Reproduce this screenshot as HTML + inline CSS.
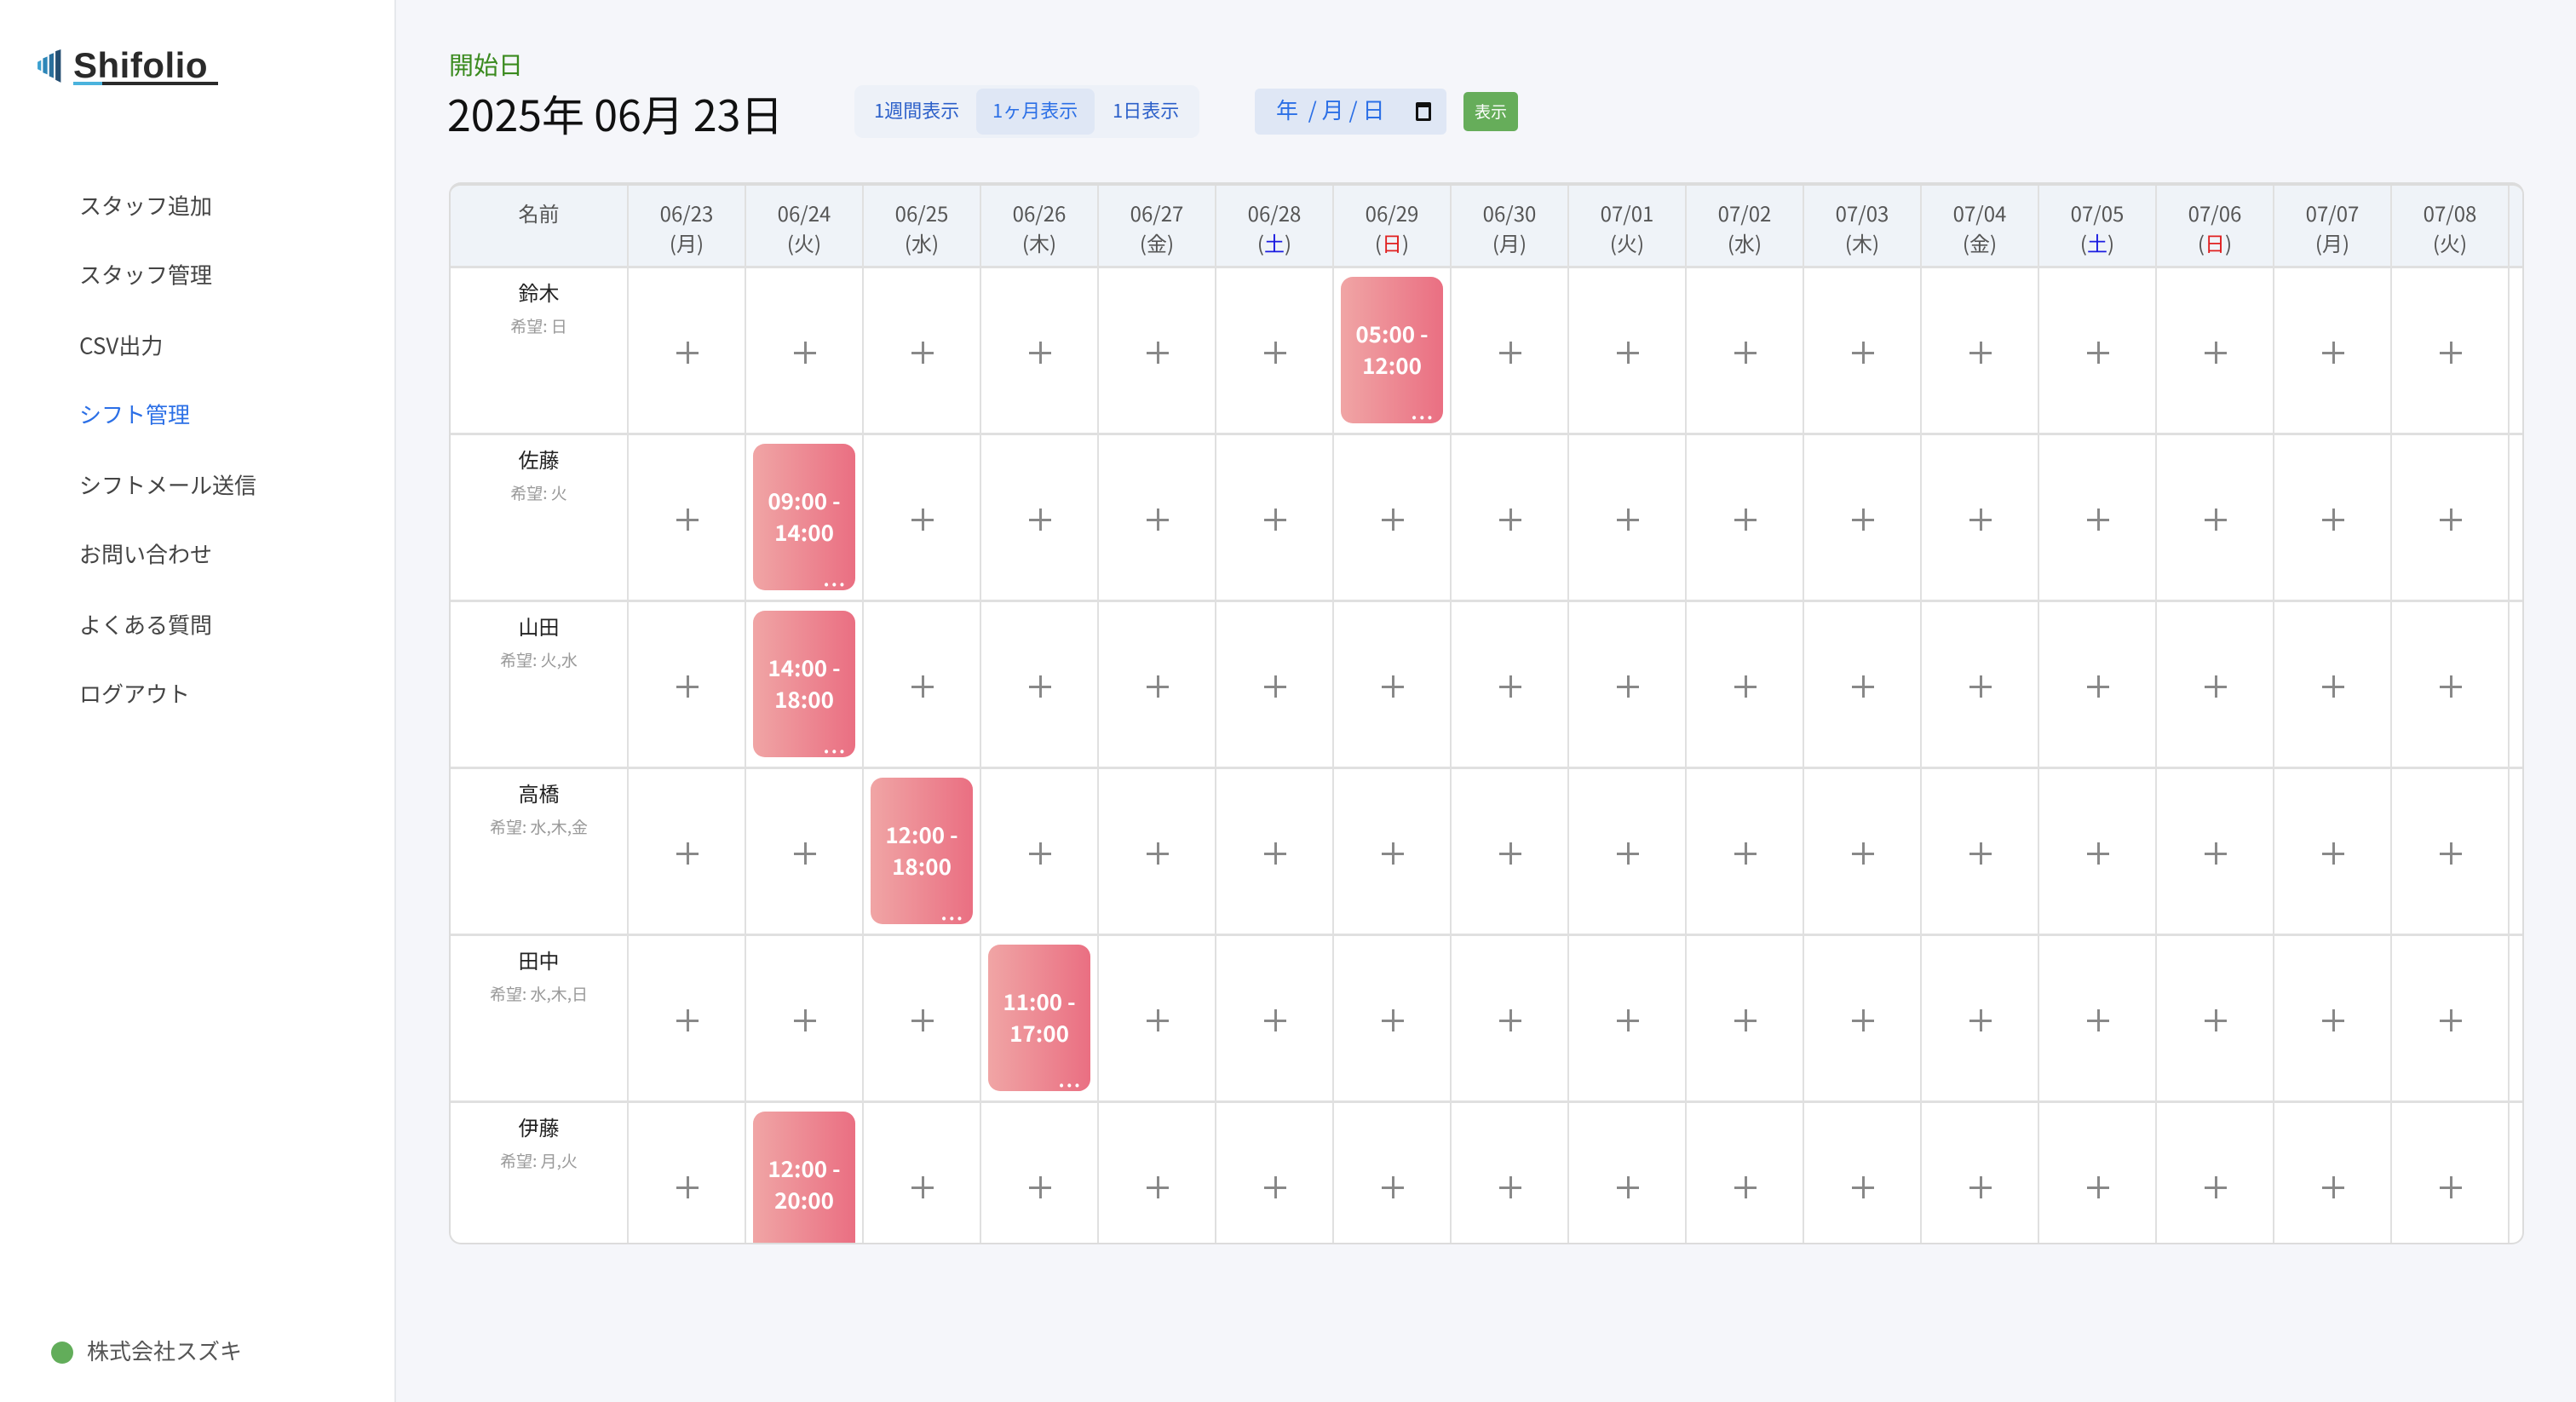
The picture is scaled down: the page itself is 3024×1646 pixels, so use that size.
<!DOCTYPE html>
<html><head><meta charset="utf-8">
<style>
*{box-sizing:border-box;margin:0;padding:0}
body{width:3024px;height:1646px;background:#f5f6fa;font-family:"Noto Sans CJK JP","Liberation Sans",sans-serif;line-height:1.2;position:relative;overflow:hidden}
.side{position:absolute;left:0;top:0;width:465px;height:1646px;background:#fff;border-right:2px solid #e6e8ec}
.nav{position:absolute;left:93px;font-size:26px;color:#444;transform:translateY(-50%)}
.ab{position:absolute}
.tbl{position:absolute;left:527px;top:214px;width:2436px;height:1247px;border:2px solid #dcdcdc;border-top-width:4px;border-radius:14px;overflow:hidden;background:#fff}
.row{display:flex;height:196px;border-bottom:3px solid #e0e0e0}
.hdr{height:97px;background:#eff3f8;border-bottom:3px solid #e0e0e0}
.c{width:138px;flex:none;border-right:2px solid #e0e0e0;position:relative}
.n{width:209px;flex:none;border-right:2px solid #e0e0e0;text-align:center;position:relative}
.hdr .c,.hdr .n{font-size:24px;color:#555;text-align:center;padding-top:14px;line-height:35px}
.plus{position:absolute;left:56px;top:86px;width:26px;height:26px}
.plus:before{content:"";position:absolute;left:0;top:11.5px;width:26px;height:3px;background:#888}
.plus:after{content:"";position:absolute;top:0;left:11.5px;height:26px;width:3px;background:#888}
.nm{position:absolute;left:0;right:0;top:14px;font-size:24px;color:#222}
.hp{position:absolute;left:0;right:0;top:57px;font-size:19px;color:#999}
.card{position:absolute;left:8px;top:10px;width:120px;height:172px;border-radius:14px;background:linear-gradient(90deg,#f0a5a5,#ea6f82);color:#fff;font-size:26px;font-weight:bold;text-align:center;line-height:37px;padding-top:48px}
.dots{position:absolute;right:10px;bottom:4px;font-size:22px;line-height:20px;letter-spacing:2px}
</style></head><body>
<div class="side">
 <div class="ab" style="left:42px;top:56px;width:220px;height:46px">
  <svg width="42" height="42" viewBox="0 0 40 40" style="position:absolute;left:0;top:2px">
   <polygon points="2,14 6,12 6,24 2,22" fill="#3aa0d0"/>
   <polygon points="8,10 13,8 13,28 8,26" fill="#2c86b8"/>
   <polygon points="15,6 20,4 20,32 15,30" fill="#2a6f9c"/>
   <polygon points="22,2 28,0 28,37 22,34" fill="#244e72"/>
  </svg>
  <div class="ab" style="left:44px;top:-4px;font-size:42px;font-weight:bold;color:#2a2a2a;font-family:'Liberation Sans',sans-serif;letter-spacing:0.5px">Shifolio</div>
  <div class="ab" style="left:44px;top:40px;width:34px;height:4px;background:#4ab3dd"></div>
  <div class="ab" style="left:78px;top:40px;width:136px;height:4px;background:#2a2a2a"></div>
 </div>
 <div class="nav" style="top:241px">スタッフ追加</div>
 <div class="nav" style="top:322px">スタッフ管理</div>
 <div class="nav" style="top:405px">CSV出力</div>
 <div class="nav" style="top:486px;color:#2b6fe6">シフト管理</div>
 <div class="nav" style="top:569px">シフトメール送信</div>
 <div class="nav" style="top:650px">お問い合わせ</div>
 <div class="nav" style="top:733px">よくある質問</div>
 <div class="nav" style="top:814px">ログアウト</div>
 <div class="ab" style="left:60px;top:1575px;width:26px;height:26px;border-radius:50%;background:#62ad5a"></div>
 <div class="ab" style="left:102px;top:1570px;font-size:26px;color:#555">株式会社スズキ</div>
</div>

<div class="ab" style="left:527px;top:58px;font-size:29px;color:#3a8a1e">開始日</div>
<div class="ab" style="left:525px;top:103px;font-size:50px;color:#111">2025年 06月 23日</div>

<div class="ab" style="left:1003px;top:100px;width:405px;height:62px;background:#edf1f8;border-radius:10px"></div>
<div class="ab" style="left:1146px;top:104px;width:139px;height:54px;background:#dfe7f5;border-radius:8px"></div>
<div class="ab" style="left:1026px;top:116px;font-size:22px;color:#2b5fc9">1週間表示</div>
<div class="ab" style="left:1165px;top:116px;font-size:22px;color:#2b6fe6">1ヶ月表示</div>
<div class="ab" style="left:1306px;top:116px;font-size:22px;color:#2b5fc9">1日表示</div>

<div class="ab" style="left:1473px;top:104px;width:225px;height:54px;background:#dfe7f5;border-radius:6px"></div>
<div class="ab" style="left:1498px;top:113px;font-size:26px;color:#2b6fe6">年 &nbsp;/ 月 / 日</div>
<div class="ab" style="left:1662px;top:120px;width:18px;height:22px;border:3px solid #111;border-top-width:6px;border-radius:2px"></div>
<div class="ab" style="left:1718px;top:108px;width:64px;height:46px;background:#66ad5a;border-radius:5px;color:#fff;font-size:19px;text-align:center;line-height:46px">表示</div>

<div class="tbl">
 <div class="row hdr">
  <div class="n">名前</div>
  <div class="c">06/23<br>(月)</div><div class="c">06/24<br>(火)</div><div class="c">06/25<br>(水)</div><div class="c">06/26<br>(木)</div><div class="c">06/27<br>(金)</div><div class="c">06/28<br>(<span style="color:#1a1ae0">土</span>)</div><div class="c">06/29<br>(<span style="color:#e02020">日</span>)</div><div class="c">06/30<br>(月)</div><div class="c">07/01<br>(火)</div><div class="c">07/02<br>(水)</div><div class="c">07/03<br>(木)</div><div class="c">07/04<br>(金)</div><div class="c">07/05<br>(<span style="color:#1a1ae0">土</span>)</div><div class="c">07/06<br>(<span style="color:#e02020">日</span>)</div><div class="c">07/07<br>(月)</div><div class="c">07/08<br>(火)</div><div class="c"></div>
 </div>
 <div class="row"><div class="n"><div class="nm">鈴木</div><div class="hp">希望: 日</div></div>
  <div class="c"><i class="plus"></i></div><div class="c"><i class="plus"></i></div><div class="c"><i class="plus"></i></div><div class="c"><i class="plus"></i></div><div class="c"><i class="plus"></i></div><div class="c"><i class="plus"></i></div><div class="c"><div class="card">05:00 -<br>12:00<span class="dots">...</span></div></div><div class="c"><i class="plus"></i></div><div class="c"><i class="plus"></i></div><div class="c"><i class="plus"></i></div><div class="c"><i class="plus"></i></div><div class="c"><i class="plus"></i></div><div class="c"><i class="plus"></i></div><div class="c"><i class="plus"></i></div><div class="c"><i class="plus"></i></div><div class="c"><i class="plus"></i></div><div class="c"></div></div>
 <div class="row"><div class="n"><div class="nm">佐藤</div><div class="hp">希望: 火</div></div>
  <div class="c"><i class="plus"></i></div><div class="c"><div class="card">09:00 -<br>14:00<span class="dots">...</span></div></div><div class="c"><i class="plus"></i></div><div class="c"><i class="plus"></i></div><div class="c"><i class="plus"></i></div><div class="c"><i class="plus"></i></div><div class="c"><i class="plus"></i></div><div class="c"><i class="plus"></i></div><div class="c"><i class="plus"></i></div><div class="c"><i class="plus"></i></div><div class="c"><i class="plus"></i></div><div class="c"><i class="plus"></i></div><div class="c"><i class="plus"></i></div><div class="c"><i class="plus"></i></div><div class="c"><i class="plus"></i></div><div class="c"><i class="plus"></i></div><div class="c"></div></div>
 <div class="row"><div class="n"><div class="nm">山田</div><div class="hp">希望: 火,水</div></div>
  <div class="c"><i class="plus"></i></div><div class="c"><div class="card">14:00 -<br>18:00<span class="dots">...</span></div></div><div class="c"><i class="plus"></i></div><div class="c"><i class="plus"></i></div><div class="c"><i class="plus"></i></div><div class="c"><i class="plus"></i></div><div class="c"><i class="plus"></i></div><div class="c"><i class="plus"></i></div><div class="c"><i class="plus"></i></div><div class="c"><i class="plus"></i></div><div class="c"><i class="plus"></i></div><div class="c"><i class="plus"></i></div><div class="c"><i class="plus"></i></div><div class="c"><i class="plus"></i></div><div class="c"><i class="plus"></i></div><div class="c"><i class="plus"></i></div><div class="c"></div></div>
 <div class="row"><div class="n"><div class="nm">高橋</div><div class="hp">希望: 水,木,金</div></div>
  <div class="c"><i class="plus"></i></div><div class="c"><i class="plus"></i></div><div class="c"><div class="card">12:00 -<br>18:00<span class="dots">...</span></div></div><div class="c"><i class="plus"></i></div><div class="c"><i class="plus"></i></div><div class="c"><i class="plus"></i></div><div class="c"><i class="plus"></i></div><div class="c"><i class="plus"></i></div><div class="c"><i class="plus"></i></div><div class="c"><i class="plus"></i></div><div class="c"><i class="plus"></i></div><div class="c"><i class="plus"></i></div><div class="c"><i class="plus"></i></div><div class="c"><i class="plus"></i></div><div class="c"><i class="plus"></i></div><div class="c"><i class="plus"></i></div><div class="c"></div></div>
 <div class="row"><div class="n"><div class="nm">田中</div><div class="hp">希望: 水,木,日</div></div>
  <div class="c"><i class="plus"></i></div><div class="c"><i class="plus"></i></div><div class="c"><i class="plus"></i></div><div class="c"><div class="card">11:00 -<br>17:00<span class="dots">...</span></div></div><div class="c"><i class="plus"></i></div><div class="c"><i class="plus"></i></div><div class="c"><i class="plus"></i></div><div class="c"><i class="plus"></i></div><div class="c"><i class="plus"></i></div><div class="c"><i class="plus"></i></div><div class="c"><i class="plus"></i></div><div class="c"><i class="plus"></i></div><div class="c"><i class="plus"></i></div><div class="c"><i class="plus"></i></div><div class="c"><i class="plus"></i></div><div class="c"><i class="plus"></i></div><div class="c"></div></div>
 <div class="row"><div class="n"><div class="nm">伊藤</div><div class="hp">希望: 月,火</div></div>
  <div class="c"><i class="plus"></i></div><div class="c"><div class="card">12:00 -<br>20:00<span class="dots">...</span></div></div><div class="c"><i class="plus"></i></div><div class="c"><i class="plus"></i></div><div class="c"><i class="plus"></i></div><div class="c"><i class="plus"></i></div><div class="c"><i class="plus"></i></div><div class="c"><i class="plus"></i></div><div class="c"><i class="plus"></i></div><div class="c"><i class="plus"></i></div><div class="c"><i class="plus"></i></div><div class="c"><i class="plus"></i></div><div class="c"><i class="plus"></i></div><div class="c"><i class="plus"></i></div><div class="c"><i class="plus"></i></div><div class="c"><i class="plus"></i></div><div class="c"></div></div>
</div>
</body></html>
